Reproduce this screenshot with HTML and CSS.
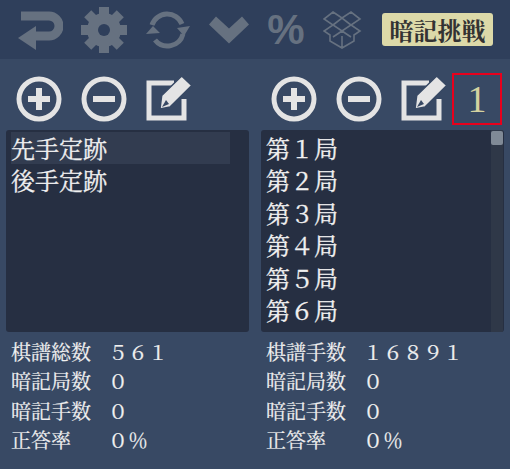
FILE: index.html
```html
<!DOCTYPE html>
<html lang="ja">
<head>
    <meta charset="UTF-8">
    <meta name="viewport" content="width=device-width, initial-scale=1.0">
    <title>暗記挑戦</title>
    <link rel="stylesheet" href="styles.css">
</head>
<body>
    <div class="toolbar">
        <svg class="tool" viewBox="0 0 46 46"><path d="M4 9H32a10 10 0 0 1 0 20H15" class="line"/><path d="M1 31 19 19V43z"/></svg>
        <svg class="tool" viewBox="0 0 46 46">
            <circle cx="23" cy="23" r="11.5" class="ring"/>
            <rect x="18" y="0" width="10" height="46"/>
            <rect x="18" y="0" width="10" height="46" transform="rotate(45 23 23)"/>
            <rect x="18" y="0" width="10" height="46" transform="rotate(90 23 23)"/>
            <rect x="18" y="0" width="10" height="46" transform="rotate(135 23 23)"/>
            <circle cx="23" cy="23" r="6" class="hole"/>
        </svg>
        <svg class="tool" viewBox="0 0 46 46"><path d="M7 18A16 16 0 0 1 37 17" class="thin"/><path d="M38 27A16 16 0 0 1 10 33" class="thin"/><path d="M32 21 45 19 39 29zM1 27 15 26 8 19z"/></svg>
        <svg class="tool chevron" viewBox="0 0 46 46"><path d="M3 17.5 10 9.5 23 21.5 36 9.5 43 17.5 23 36.5z"/></svg>
        <div class="percent">%</div>
        <svg class="box" viewBox="0 0 40 38"><path d="M10 1 19 7 28 1 37 8 28 14 37 20 31 24V30L19 37 7 30V24L1 20 10 14 1 8zM10 14 19 7 28 14 19 20zM19 20 28 26M19 20 10 26M19 25V37"/></svg>
        <div class="challenge">暗記挑戦</div>
    </div>

    <div class="panels">
        <div class="panel">
            <div class="actions">
                <svg class="action" viewBox="0 0 46 46"><circle cx="23" cy="23" r="20"/><path d="M23 12v22M12 23h22" class="sign"/></svg>
                <svg class="action" viewBox="0 0 46 46"><circle cx="23" cy="23" r="20"/><path d="M12 23h22" class="sign"/></svg>
                <svg class="action" viewBox="0 0 46 46"><path d="M28 7H3V42H38V23" class="frame"/><path d="M35.7 0 45.7 9.5 24 31 14 33 15.7 19.5z" class="pen"/><path d="M20 24 23 28 16 31z" class="nib"/></svg>
            </div>
            <ul class="list">
                <li class="current">先手定跡</li>
                <li>後手定跡</li>
            </ul>
            <dl class="stats">
                <dt>棋譜総数</dt><dd>５６１</dd>
                <dt>暗記局数</dt><dd>０</dd>
                <dt>暗記手数</dt><dd>０</dd>
                <dt>正答率</dt><dd>０％</dd>
            </dl>
        </div>
        <div class="panel">
            <div class="actions">
                <svg class="action" viewBox="0 0 46 46"><circle cx="23" cy="23" r="20"/><path d="M23 12v22M12 23h22" class="sign"/></svg>
                <svg class="action" viewBox="0 0 46 46"><circle cx="23" cy="23" r="20"/><path d="M12 23h22" class="sign"/></svg>
                <svg class="action" viewBox="0 0 46 46"><path d="M28 7H3V42H38V23" class="frame"/><path d="M35.7 0 45.7 9.5 24 31 14 33 15.7 19.5z" class="pen"/><path d="M20 24 23 28 16 31z" class="nib"/></svg>
                <div class="count">1</div>
            </div>
            <div class="list-wrap">
                <ul class="list">
                    <li>第１局</li>
                    <li>第２局</li>
                    <li>第３局</li>
                    <li>第４局</li>
                    <li>第５局</li>
                    <li>第６局</li>
                </ul>
                <div class="scrollbar"><div class="thumb"></div></div>
            </div>
            <dl class="stats">
                <dt>棋譜手数</dt><dd>１６８９１</dd>
                <dt>暗記局数</dt><dd>０</dd>
                <dt>暗記手数</dt><dd>０</dd>
                <dt>正答率</dt><dd>０％</dd>
            </dl>
        </div>
    </div>
</body>
</html>
```

FILE: styles.css
```css
body {
    margin: 0;
    width: 510px;
    height: 469px;
    overflow: hidden;
    background: #384964;
    color: #f0f0f0;
    font-family: "Noto Serif CJK JP", "Liberation Serif", "Noto Sans CJK JP", serif;
}
.toolbar {
    display: flex;
    align-items: center;
    gap: 18px;
    height: 59px;
    padding-left: 17px;
    box-sizing: border-box;
    background: #2f3f5b;
}
.tool {
    width: 46px;
    height: 46px;
    flex: none;
    fill: #667180;
}
.line {
    fill: none;
    stroke: #667180;
    stroke-width: 9;
}
.thin {
    fill: none;
    stroke: #667180;
    stroke-width: 5;
}
.ring {
    fill: none;
    stroke: #667180;
    stroke-width: 11;
}
.hole {
    fill: #2f3f5b;
}
.chevron {
    margin-left: -3px;
}
.percent {
    width: 38px;
    margin-left: -3px;
    font-family: "Liberation Sans", sans-serif;
    font-size: 42px;
    font-weight: bold;
    color: #667180;
    text-align: center;
}
.box {
    width: 40px;
    height: 38px;
    flex: none;
    fill: none;
    stroke: #667180;
    stroke-width: 1.6;
}
.challenge {
    width: 111px;
    height: 33px;
    margin-left: 1px;
    line-height: 33px;
    border-radius: 3px;
    background: #dcd9a8;
    color: #333;
    font-size: 24px;
    font-weight: bold;
    text-align: center;
}
.panels {
    display: flex;
    gap: 12px;
    padding: 0 6px;
}
.panel {
    width: 243px;
}
.actions {
    display: flex;
    align-items: center;
    height: 71px;
    box-sizing: border-box;
    padding: 8px 0 0 10px;
    gap: 19px;
}
.action {
    width: 46px;
    height: 46px;
    flex: none;
}
.action circle {
    fill: none;
    stroke: #e4e4e4;
    stroke-width: 5;
}
.sign {
    fill: none;
    stroke: #e4e4e4;
    stroke-width: 6;
}
.frame {
    fill: none;
    stroke: #e4e4e4;
    stroke-width: 5;
}
.pen {
    fill: #e4e4e4;
    stroke: #384964;
    stroke-width: 1.5;
}
.nib {
    fill: #384964;
}
.count {
    width: 50px;
    height: 52px;
    flex: none;
    margin-left: -14px;
    border: 2px solid #e8001c;
    box-sizing: border-box;
    color: #d4d2a0;
    font-family: "Liberation Serif", serif;
    font-size: 38px;
    line-height: 48px;
    text-align: center;
}
.list {
    list-style: none;
    margin: 0;
    padding: 2px 0 0 5px;
    height: 202px;
    box-sizing: border-box;
    border-radius: 3px;
    background: #262f42;
    font-size: 24px;
    -webkit-text-stroke: 0.3px;
    overflow: hidden;
}
.list li {
    height: 32.4px;
    line-height: 32px;
}
.list .current {
    width: 219px;
    background: #323c50;
}
.list-wrap {
    position: relative;
}
.scrollbar {
    position: absolute;
    top: 0;
    right: 1px;
    bottom: 0;
    width: 12px;
    background: #2f3848;
}
.thumb {
    height: 14px;
    margin: 1px 0;
    border-radius: 2px;
    background: #808a96;
}
.stats {
    display: grid;
    grid-template-columns: 97px 1fr;
    margin: 5px 0 0 5px;
    font-size: 20px;
    line-height: 29.3px;
    -webkit-text-stroke: 0.2px;
}
.stats dd {
    margin: 0;
}
```
